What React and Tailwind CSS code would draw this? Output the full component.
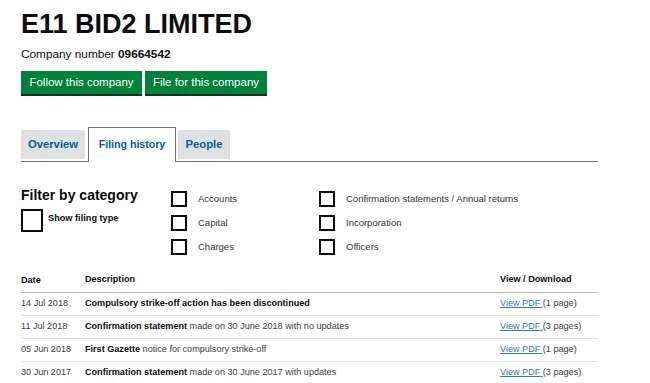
const categories = [
  ["Accounts", "Confirmation statements / Annual returns"],
  ["Capital", "Incorporation"],
  ["Charges", "Officers"],
];

const filings = [
  { date: "14 Jul 2018", bold: "Compulsory strike-off action has been discontinued", rest: "", pages: "1 page" },
  { date: "11 Jul 2018", bold: "Confirmation statement", rest: " made on 30 June 2018 with no updates", pages: "3 pages" },
  { date: "05 Jun 2018", bold: "First Gazette", rest: " notice for compulsory strike-off", pages: "1 page" },
  { date: "30 Jun 2017", bold: "Confirmation statement", rest: " made on 30 June 2017 with updates", pages: "3 pages" },
];

function Box({ size = "small" }) {
  return (
    <span
      className={
        size === "small"
          ? "block h-[16px] w-[16px] shrink-0 border-2 border-[#0b0c0c] bg-white"
          : "block h-[23px] w-[22px] shrink-0 border-2 border-[#0b0c0c] bg-white"
      }
    />
  );
}

export default function App() {
  return (
    <div className="min-h-[383px] bg-white px-[21px] pt-[12px] font-['Liberation_Sans',Arial,sans-serif] text-[#0b0c0c]">
      <h1 className="text-[27px] font-bold leading-[24px]">E11 BID2 LIMITED</h1>
      <p className="mt-[11px] text-[11.8px] leading-[14px]">
        Company number <b>09664542</b>
      </p>

      <div className="mt-[10px] flex gap-[3px]">
        <button className="h-[23px] w-[121px] bg-[#00823b] text-[11.5px] text-white shadow-[0_2px_0_#003618]">
          Follow this company
        </button>
        <button className="h-[23px] w-[122px] bg-[#00823b] text-[11.5px] text-white shadow-[0_2px_0_#003618]">
          File for this company
        </button>
      </div>

      <div className="mt-[33px] flex w-[577px] items-end border-b border-[#6f777b]">
        <div className="mb-[2px] flex h-[29px] w-[64px] items-center justify-center bg-[#dee0e2] text-[11.3px] font-bold text-[#005ea5]">
          Overview
        </div>
        <div className="-mb-px ml-[3px] flex h-[35px] w-[88px] items-center justify-center border border-b-0 border-[#6f777b] bg-white text-[10.6px] font-bold text-[#005ea5]">
          Filing history
        </div>
        <div className="mb-[2px] ml-[2px] flex h-[29px] w-[52px] items-center justify-center bg-[#dee0e2] text-[11.3px] font-bold text-[#005ea5]">
          People
        </div>
      </div>

      <div className="mt-[24px] flex">
        <div className="w-[150px]">
          <h2 className="text-[14px] font-bold leading-[18px]">Filter by category</h2>
          <label className="mt-[5px] flex items-start gap-[5px]">
            <Box size="large" />
            <span className="pt-[3px] text-[9.2px] font-bold">Show filing type</span>
          </label>
        </div>
        <div className="grid grid-cols-[148px_auto] gap-y-[8px] pt-[5px]">
          {categories.map((row) =>
            row.map((label) => (
              <label key={label} className="flex items-center gap-[11px] text-[9.5px] text-[#333]">
                <Box />
                <span>{label}</span>
              </label>
            ))
          )}
        </div>
      </div>

      <table className="mt-[14px] w-[577px] border-collapse text-[9.1px]">
        <thead>
          <tr className="border-b border-[#bfc1c3] text-left">
            <th className="h-[23px] w-[64px] pt-[1px] font-bold">Date</th>
            <th className="font-bold">Description</th>
            <th className="w-[98px] font-bold">View / Download</th>
          </tr>
        </thead>
        <tbody>
          {filings.map((f) => (
            <tr key={f.date} className="h-[23px] border-b border-[#dee0e2] text-[#3a3d3f]">
              <td>{f.date}</td>
              <td>
                <b className="text-[#0b0c0c]">{f.bold}</b>
                {f.rest}
              </td>
              <td>
                <a href="#" className="text-[#2b7ac4] underline">
                  View PDF{" "}
                </a>
                ({f.pages})
              </td>
            </tr>
          ))}
        </tbody>
      </table>
    </div>
  );
}
